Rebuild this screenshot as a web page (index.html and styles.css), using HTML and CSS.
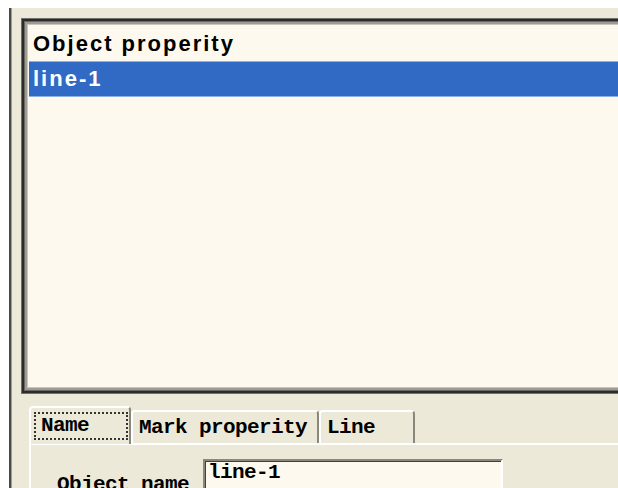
FILE: index.html
```html
<!DOCTYPE html>
<html>
<head>
<meta charset="utf-8">
<link rel="stylesheet" href="styles.css">
</head>
<body>
<div class="panel">
  <div class="listbox">
    <div class="list-header">Object properity</div>
    <div class="list-item selected">line-1</div>
  </div>
  <div class="tabs">
    <div class="tab active"><span class="focus">Name</span></div>
    <div class="tab">Mark properity</div>
    <div class="tab">Line</div>
  </div>
  <div class="tab-page">
    <div class="field">
      <label class="field-label">Object name</label>
      <div class="field-input">line-1</div>
    </div>
  </div>
</div>
</body>
</html>
```
FILE: styles.css
```css
html, body {
  margin: 0;
  padding: 0;
  background: #ffffff;
  width: 618px;
  height: 488px;
  overflow: hidden;
}

body {
  padding: 8px 0 0 9px;
  box-sizing: border-box;
}

.panel {
  background: #ece9d8;
  border-left: 2px solid #4a4a4a;
  box-shadow: inset 1px 0 0 #a09d92;
  height: 480px;
  padding: 11px 0 0 11px;
  box-sizing: border-box;
  overflow: hidden;
}

.listbox {
  width: 640px;
  height: 374px;
  box-sizing: border-box;
  background: #fef9ee;
  border: 2px solid #2b2b2b;
  box-shadow: 0 0 0 1px #6f6f6f, inset 0 0 0 1px #6a6862, inset 0 0 0 3px #9e9b92, inset 0 0 0 4px #c9c6bc;
  padding: 5px 0 0 5px;
}

.list-header,
.list-item {
  padding-left: 4px;
  font-family: "Liberation Sans", Arial, sans-serif;
  font-weight: bold;
  font-size: 22px;
  letter-spacing: 2px;
}

.list-header {
  height: 35px;
  line-height: 35px;
  color: #000;
}

.list-item {
  height: 36px;
  line-height: 35px;
}

.list-item.selected {
  background: #316ac5;
  color: #ffffff;
  box-shadow: inset 0 1px 0 #8fb0e2, inset 0 -1px 0 #8fb0e2;
}

.tabs {
  display: flex;
  align-items: flex-end;
  margin: 12px 0 0 7px;
  height: 38px;
  font-family: "Liberation Mono", "Courier New", monospace;
  font-weight: bold;
  font-size: 21px;
  letter-spacing: -0.6px;
  color: #000;
}

.tab {
  height: 33px;
  box-sizing: border-box;
  border-left: 2px solid #ffffff;
  border-top: 2px solid #ffffff;
  border-right: 2px solid #8a877c;
  border-radius: 4px 4px 0 0;
  padding: 3px 0 0 6px;
  line-height: 26px;
  white-space: nowrap;
}

.tab:nth-child(2) { width: 188px; }
.tab:nth-child(3) { width: 96px; }

.tab.active {
  width: 102px;
  height: 38px;
  padding: 4px 0 0 3px;
  position: relative;
  z-index: 1;
  margin-bottom: -1px;
  background: #ece9d8;
}

.focus {
  display: inline-block;
  width: 94px;
  height: 28px;
  line-height: 24px;
  padding-left: 5px;
  box-sizing: border-box;
  border: 2px dotted #333;
}

.tab-page {
  margin-left: 7px;
  border-top: 2px solid #ffffff;
  border-left: 2px solid #ffffff;
  height: 60px;
  padding: 14px 0 0 26px;
  box-sizing: border-box;
}

.field {
  display: flex;
  align-items: flex-start;
}

.field-label {
  width: 146px;
  padding-top: 14px;
  font-family: "Liberation Mono", "Courier New", monospace;
  font-weight: bold;
  font-size: 21px;
  letter-spacing: -0.6px;
  white-space: nowrap;
}

.field-input {
  width: 300px;
  height: 34px;
  box-sizing: border-box;
  background: #fef9ee;
  border-top: 2px solid #8a877c;
  border-left: 2px solid #8a877c;
  border-right: 2px solid #ffffff;
  box-shadow: inset 1px 1px 0 #404040;
  padding: 2px 0 0 3px;
  font-family: "Liberation Mono", "Courier New", monospace;
  font-weight: bold;
  font-size: 21px;
  letter-spacing: -0.6px;
  line-height: 20px;
}
```
